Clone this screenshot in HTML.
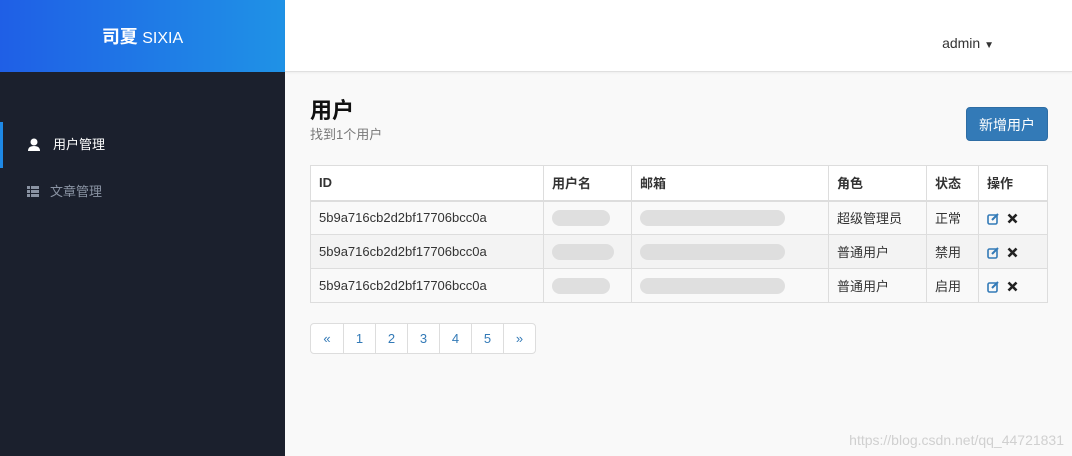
<!DOCTYPE html>
<html><head><meta charset="utf-8"><style>
*{margin:0;padding:0;box-sizing:border-box}
body{width:1072px;height:456px;overflow:hidden;font-family:"Liberation Sans","Noto Sans CJK SC",sans-serif;background:#f9f9f9;position:relative;font-size:13px;color:#333}
.brand{position:absolute;left:0;top:0;width:285px;height:72px;background:linear-gradient(90deg,#1f5fe6,#1f92e6);color:#fff;text-align:center;line-height:74px;font-size:16px}
.brand b{font-size:18px}
.side{position:absolute;left:0;top:72px;width:285px;height:384px;background:#1b202d}
.top{position:absolute;left:285px;top:0;right:0;height:72px;background:#fff;border-bottom:1px solid #e0e0e0;box-shadow:0 1px 2px rgba(0,0,0,.05)}
.admin{position:absolute;right:78px;top:35px;font-size:14px;color:#333}
.nav{position:absolute;left:0;width:285px;height:46px;line-height:46px;padding-left:50px;font-size:13px}
.nav.a{top:122px;color:#fff;border-left:3px solid #1e88e5}
.nav.b{top:169px;color:#8a93a3}
h1{position:absolute;left:310px;top:93px;font-size:22px;font-weight:bold;color:#111}
.sub{position:absolute;left:310px;top:124px;font-size:13px;color:#777}
.btn{position:absolute;left:966px;top:107px;width:82px;height:34px;background:#337ab7;border-radius:4px;color:#fff;font-size:14px;text-align:center;line-height:34px;border:1px solid #2e6da4}
table{position:absolute;left:310px;top:165px;width:738px;border-collapse:collapse;background:#fff}
td,th{border:1px solid #ddd;padding:0 8px;height:34px;text-align:left;font-size:13px}
th{font-weight:bold;border-bottom:2px solid #ddd;height:35px}
tr.o td{background:#f9f9f9}tr.e td{background:#f3f3f3}
.bl{display:inline-block;height:16px;background:#dcdcdc;border-radius:8px;vertical-align:middle;opacity:.9}
.pg{position:absolute;left:310px;top:323px;display:flex;border:1px solid #ddd;border-radius:4px;background:#fff}
.pg span{width:32px;height:29px;line-height:29px;text-align:center;color:#337ab7;border-left:1px solid #ddd;font-size:13px}
.pg span:first-child{border-left:0}
.wm{position:absolute;right:8px;top:432px;color:#d0d0d0;font-size:14px}
</style></head><body>
<div class="brand"><b>司夏</b> SIXIA</div>
<div class="top"><div class="admin">admin <span style="font-size:10px">▼</span></div></div>
<div class="side"></div>
<div class="nav a"><svg style="position:absolute;left:24px;top:16px" width="14" height="13" viewBox="0 0 14 13"><circle cx="7" cy="4" r="3.5" fill="#fff"/><path d="M1 13 Q1 8 7 8 Q13 8 13 13Z" fill="#fff"/></svg>用户管理</div>
<div class="nav b"><svg style="position:absolute;left:27px;top:17px" width="12" height="11" viewBox="0 0 12 11" fill="#8a93a3"><rect x="0" y="0" width="3" height="3"/><rect x="4" y="0" width="8" height="3"/><rect x="0" y="4" width="3" height="3"/><rect x="4" y="4" width="8" height="3"/><rect x="0" y="8" width="3" height="3"/><rect x="4" y="8" width="8" height="3"/></svg>文章管理</div>
<h1>用户</h1>
<div class="sub">找到1个用户</div>
<div class="btn">新增用户</div>
<table>
<tr><th style="width:233px">ID</th><th style="width:88px">用户名</th><th style="width:197px">邮箱</th><th style="width:98px">角色</th><th style="width:52px">状态</th><th>操作</th></tr>
<tr class="o"><td>5b9a716cb2d2bf17706bcc0a</td><td><span class="bl" style="width:58px"></span></td><td><span class="bl" style="width:145px"></span></td><td>超级管理员</td><td>正常</td><td>ICON</td></tr>
<tr class="e"><td>5b9a716cb2d2bf17706bcc0a</td><td><span class="bl" style="width:62px"></span></td><td><span class="bl" style="width:145px"></span></td><td>普通用户</td><td>禁用</td><td>ICON</td></tr>
<tr class="o"><td>5b9a716cb2d2bf17706bcc0a</td><td><span class="bl" style="width:58px"></span></td><td><span class="bl" style="width:145px"></span></td><td>普通用户</td><td>启用</td><td>ICON</td></tr>
</table>
<div class="pg"><span>«</span><span>1</span><span>2</span><span>3</span><span>4</span><span>5</span><span>»</span></div>
<div class="wm">https://blog.csdn.net/qq_44721831</div>
<script>
document.querySelectorAll('td').forEach(function(t){if(t.textContent==='ICON'){t.innerHTML='<svg width="13" height="12" viewBox="0 0 13 12" style="vertical-align:middle"><rect x="1" y="2" width="9" height="9" rx="1.5" fill="none" stroke="#337ab7" stroke-width="1.6"/><path d="M5 7 L11 1" stroke="#337ab7" stroke-width="2"/></svg> <svg width="11" height="11" viewBox="0 0 11 11" style="vertical-align:middle;margin-left:3px"><path d="M1.5 1.5 L9.5 9.5 M9.5 1.5 L1.5 9.5" stroke="#222" stroke-width="2.6"/></svg>';}});
</script>
</body></html>
